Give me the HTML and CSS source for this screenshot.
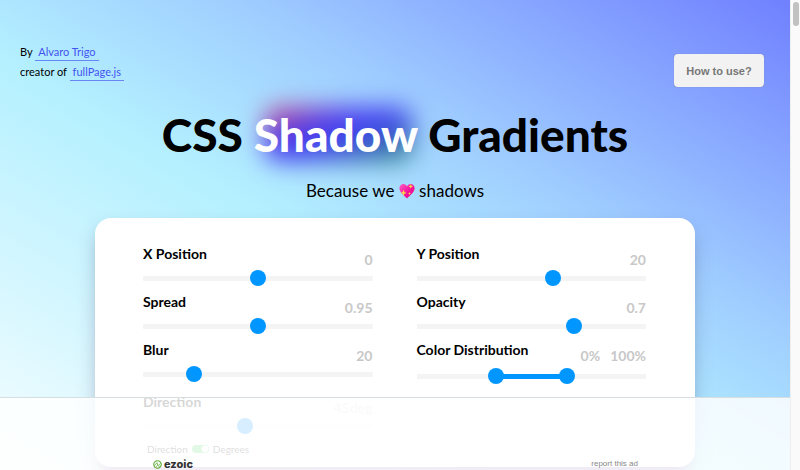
FILE: index.html
```html
<!DOCTYPE html>
<html lang="en">
<head>
<meta charset="utf-8">
<title>CSS Shadow Gradients</title>
<link rel="stylesheet" href="styles.css">
</head>
<body>
<div class="page">
  <header class="header">
    <p class="credits">By <a href="#author">Alvaro Trigo</a><br>creator of <a href="#fullpage">fullPage.js</a></p>
    <button class="help" type="button">How to use?</button>
  </header>
  <main>
    <h1 class="title">CSS <span class="glow">Shadow</span> Gradients</h1>
    <p class="subtitle">Because we
      <svg class="heart" viewBox="0 0 16 16" role="img" aria-label="love">
        <defs><linearGradient id="pink" x1="0" y1="0" x2="1" y2="1"><stop offset="0" stop-color="#ff5fc4"/><stop offset=".55" stop-color="#f5129b"/><stop offset="1" stop-color="#e00f80"/></linearGradient></defs>
        <path fill="url(#pink)" d="M8 15.5C5.8 12.8.4 9.600.4 5.200.4 2.500 2.300.9 4.400.9c1.700 0 2.900 1 3.600 2.400C8.700 1.900 9.900.9 11.600.9c2.100 0 4 1.600 4 4.300 0 4.400-5.400 7.600-7.600 10.300z"/>
        <path fill="#ffd54a" d="M11.800 1l.7 1.700 1.800.6-1.800.7-.7 1.800-.7-1.800-1.700-.7 1.700-.6zM4.600 6.800l.9 2.200 2.200.9-2.200.8-.9 2.300-.9-2.300-2.200-.8 2.200-.9zM10.500 9l.4 1.100 1.100.4-1.100.4-.4 1.100-.4-1.100-1.100-.4 1.100-.4z"/>
      </svg>
      shadows</p>
    <form class="card">
      <div class="field">
        <div class="caption"><label for="x">X Position</label><output for="x">0</output></div>
        <input id="x" type="range" min="0" max="100" value="50">
      </div>
      <div class="field">
        <div class="caption"><label for="y">Y Position</label><output for="y">20</output></div>
        <input id="y" type="range" min="0" max="100" value="60">
      </div>
      <div class="field">
        <div class="caption"><label for="spread">Spread</label><output for="spread">0.95</output></div>
        <input id="spread" type="range" min="0" max="100" value="50">
      </div>
      <div class="field">
        <div class="caption"><label for="opacity">Opacity</label><output for="opacity">0.7</output></div>
        <input id="opacity" type="range" min="0" max="100" value="70">
      </div>
      <div class="field">
        <div class="caption"><label for="blur">Blur</label><output for="blur">20</output></div>
        <input id="blur" type="range" min="0" max="100" value="20">
      </div>
      <div class="field">
        <div class="caption"><label for="from">Color Distribution</label><span class="pair"><output for="from">0%</output><output for="to">100%</output></span></div>
        <div class="dual">
          <input id="from" type="range" min="-100" max="200" value="0">
          <input id="to" type="range" min="-100" max="200" value="100" aria-label="Color distribution end">
        </div>
      </div>
      <div class="field">
        <div class="caption"><label for="direction">Direction</label><output class="faint" for="direction">45deg</output></div>
        <input id="direction" type="range" min="0" max="100" value="44">
        <label class="switch">Direction <input type="checkbox" checked> Degrees</label>
      </div>
    </form>
  </main>
  <aside class="ad">
    <a class="brand" href="#ezoic">
      <svg viewBox="0 0 10 10" aria-hidden="true"><g fill="none" stroke="#62ad3b"><circle cx="5" cy="5" r="4.200" stroke-width="1.200"/><path d="M1.500 6.300L4.500 3l1 3.500L8.500 3.500M3 7.800l2-2M5.800 8.300L8 6" stroke-width=".9"/></g></svg>
      ezoic</a>
    <a class="report" href="#report">report this ad</a>
  </aside>
</div>
<div class="scrollbar"><div class="thumb"></div></div>
</body>
</html>
```
FILE: styles.css
```css
* { box-sizing: border-box; }

body {
  margin: 0;
  height: 100vh;
  overflow: hidden;
  display: grid;
  grid-template-columns: 1fr 10px;
  font-family: Lato, "Open Sans", sans-serif;
  color: #000;
}

.page {
  position: relative;
  height: 100vh;
  overflow: hidden;
  background: linear-gradient(to top right, #f4fdff 0%, #b4f0ff 44%, #a0cfff 64%, #7080ff 100%);
}

.header {
  display: flex;
  justify-content: space-between;
  align-items: flex-end;
  padding: 42px 26px 0 20px;
}

.credits {
  margin: 0;
  align-self: flex-start;
  height: 45px;
  font-size: 11px;
  line-height: 20px;
}

.credits a {
  display: inline-block;
  line-height: 16px;
  padding: 0 3px;
  color: #4353f0;
  text-decoration: none;
  border-bottom: 1px solid #6a86f4;
}

.help {
  width: 90px;
  height: 33px;
  padding: 0;
  border: 0;
  border-radius: 4px;
  background: #f2f2f2;
  color: #777;
  font: bold 11px "Liberation Sans", sans-serif;
  box-shadow: 0 0 1px #777;
}

.title {
  margin: 18px 0 14px;
  text-align: center;
  font-size: 46px;
  font-weight: 900;
  line-height: 60px;
}

.glow {
  position: relative;
  z-index: 0;
  color: #fff;
}

.glow::before {
  content: "";
  position: absolute;
  z-index: -1;
  inset: 0 4px 0 10px;
  border-radius: 16px;
  background: linear-gradient(to bottom right, #ef4770 0%, #4a3cf0 35%, #4145f0 55%, #2f9a70 100%);
  filter: blur(12px);
}

.subtitle {
  margin: 0 0 15px;
  text-align: center;
  font-size: 17px;
  line-height: 24px;
}

.heart {
  width: 16px;
  height: 16px;
  vertical-align: -2px;
}

.card {
  display: grid;
  grid-template-columns: 1fr 1fr;
  column-gap: 44px;
  max-width: 600px;
  margin: 0 auto;
  padding: 26px 49px 4px 48px;
  border-radius: 16px;
  background: #fff;
  box-shadow: 0 10px 18px rgba(70, 70, 110, .28), 0 16px 12px -10px rgba(190, 40, 170, .5);
}

.field { padding-bottom: 6px; }

.caption {
  display: flex;
  justify-content: space-between;
  height: 26px;
  font-size: 14px;
  font-weight: 700;
  line-height: 20px;
}

.caption output {
  align-self: flex-end;
  color: #c8c8c8;
}

.caption .faint { color: #e0e0e0; }

.pair {
  display: flex;
  gap: 10px;
  align-self: flex-end;
}

input[type="range"] {
  appearance: none;
  display: block;
  width: 100%;
  height: 16px;
  margin: 0;
  background: linear-gradient(#f4f4f4, #f4f4f4) center / 100% 5px no-repeat;
}

input[type="range"]::-webkit-slider-thumb {
  appearance: none;
  width: 16px;
  height: 16px;
  border-radius: 50%;
  background: #0096ff;
  pointer-events: auto;
}

.dual {
  position: relative;
  height: 20px;
  background:
    linear-gradient(to right, transparent 34%, #0096ff 34% 66%, transparent 66%) center / 100% 5px no-repeat,
    linear-gradient(#f4f4f4, #f4f4f4) center / 100% 5px no-repeat;
}

.dual input[type="range"] {
  position: absolute;
  top: 2px;
  left: 0;
  background: none;
  pointer-events: none;
}

.switch {
  display: flex;
  align-items: center;
  gap: 4px;
  padding: 7px 4px 0;
  color: #333;
  font-size: 10px;
  line-height: 16px;
}

.switch input {
  appearance: none;
  width: 17px;
  height: 8px;
  margin: 0;
  border-radius: 4px;
  background: radial-gradient(circle at 13px 4px, #fff 3px, #4cd964 4px);
}

.ad {
  position: absolute;
  z-index: 2;
  inset: auto 0 0 0;
  height: 73px;
  display: flex;
  justify-content: space-between;
  align-items: flex-end;
  padding: 0 152px 0 153px;
  border-top: 1px solid #d5dfe2;
  background: rgba(255, 255, 255, .84);
}

.ad a { text-decoration: none; }

.brand {
  display: flex;
  align-items: center;
  gap: 2px;
  color: #333;
  font: 800 11px/12px Inter, sans-serif;
}

.brand svg {
  width: 9px;
  height: 9px;
}

.report {
  color: #888;
  font: 8px/12px "Liberation Sans", sans-serif;
}

.scrollbar {
  padding: 2px;
  background: #fafafa;
  border-left: 1px solid #eee;
}

.thumb {
  width: 6px;
  height: 24px;
  border-radius: 3px;
  background: #c1c1c1;
}
```
